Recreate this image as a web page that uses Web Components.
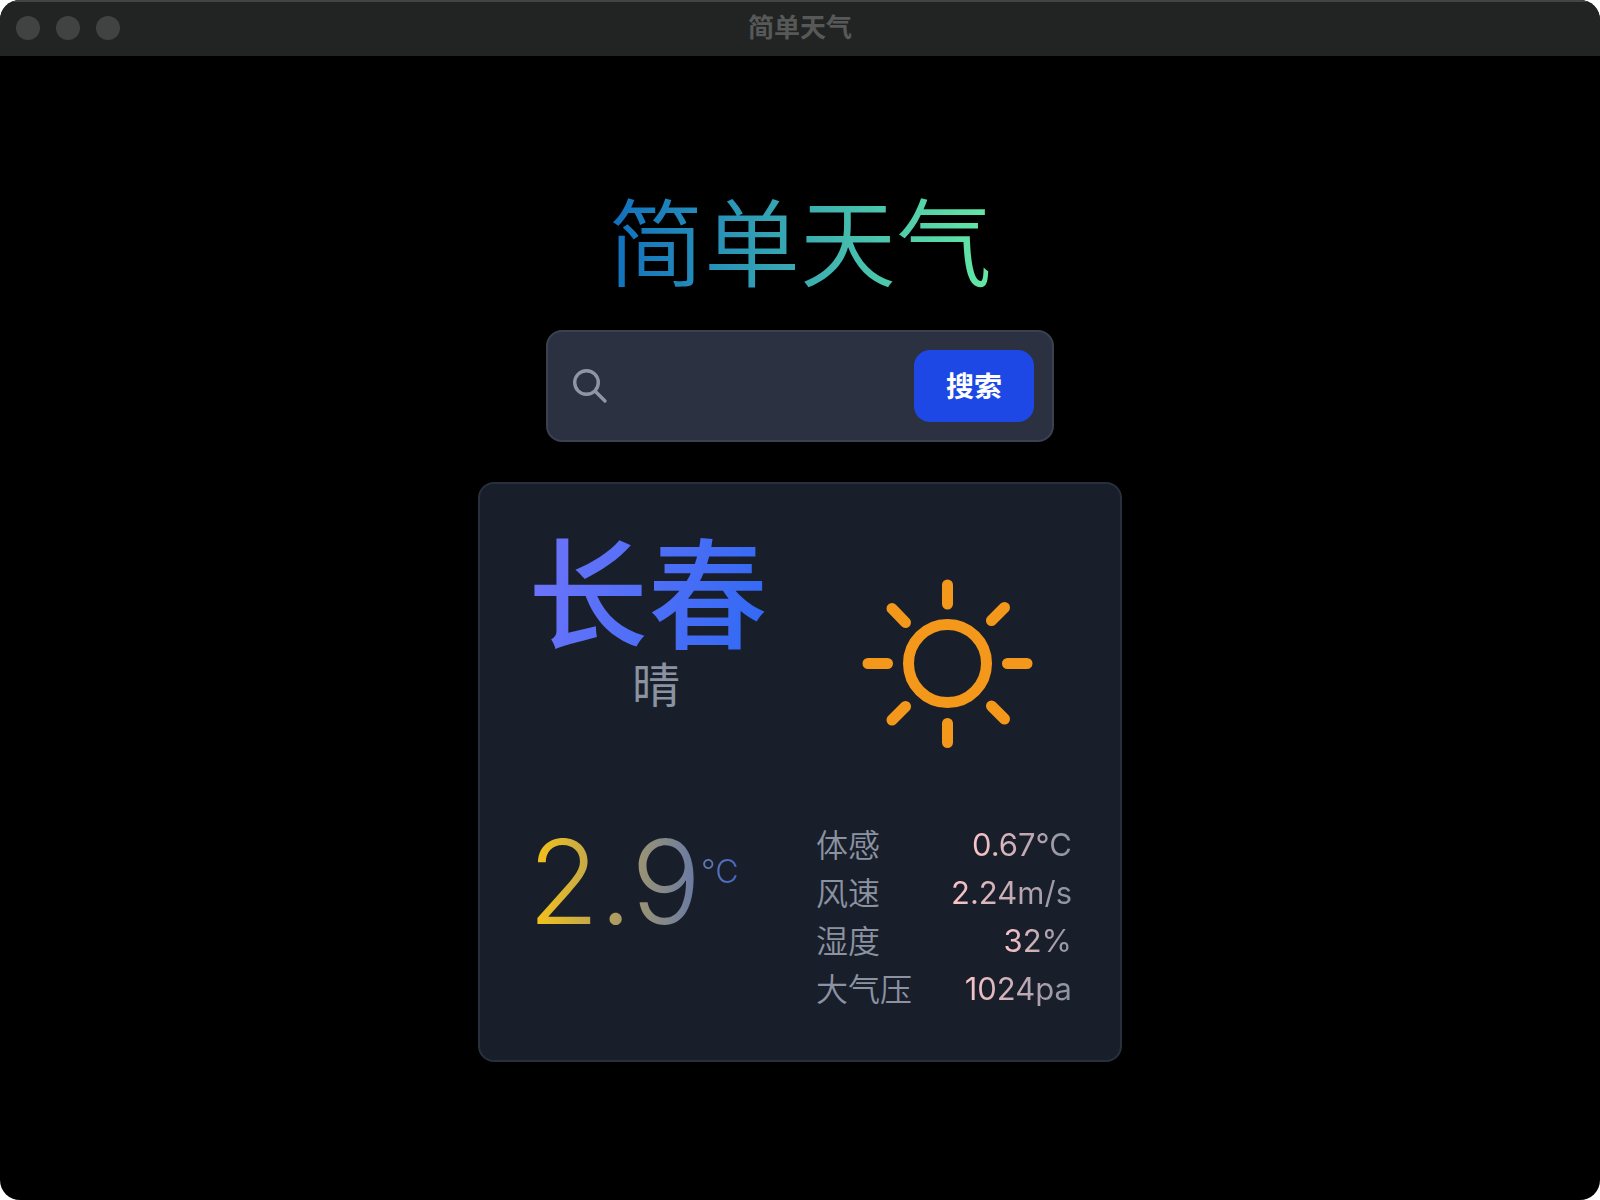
<!DOCTYPE html>
<html lang="zh-CN">
<head>
<meta charset="utf-8">
<meta name="viewport" content="width=device-width, initial-scale=1">
<title>简单天气</title>
<style>
  html, body { margin: 0; background: #fff; }
  body { font-family: Inter, "Noto Sans CJK SC", sans-serif; font-weight: 350; }
</style>
</head>
<body>
<app-window name="简单天气">
  <weather-heading>简单天气</weather-heading>
  <search-bar action-text="搜索"></search-bar>
  <weather-card>
    <span slot="city">长春</span>
    <span slot="condition">晴</span>
    <sun-icon slot="icon"></sun-icon>
    <weather-temperature slot="temperature" unit="°C">2.9</weather-temperature>
    <weather-detail slot="details" label="体感">0.67°C</weather-detail>
    <weather-detail slot="details" label="风速">2.24m/s</weather-detail>
    <weather-detail slot="details" label="湿度">32%</weather-detail>
    <weather-detail slot="details" label="大气压">1024pa</weather-detail>
  </weather-card>
</app-window>

<script>
class BaseElement extends HTMLElement {
  constructor() {
    super();
    this.attachShadow({ mode: 'open' });
  }
  connectedCallback() {
    this.shadowRoot.innerHTML = `<style>*{box-sizing:border-box}:host{box-sizing:border-box}</style>` + this.render();
  }
}

customElements.define('app-window', class extends BaseElement {
  render() {
    return `
      <style>
        :host { display: flex; flex-direction: column; min-height: 100vh; background: #000; border-radius: 20px; overflow: hidden; }
        header { display: grid; grid-template-columns: 1fr auto 1fr; align-items: center; height: 56px; padding: 0 16px; background: #222423; box-shadow: inset 0 2px #434544; }
        .dots { display: flex; gap: 16px; }
        .dots i { width: 24px; height: 24px; border-radius: 50%; background: #414342; }
        .name { font-size: 26px; line-height: 32px; font-weight: 700; color: #575958; }
        main { display: flex; flex-direction: column; align-items: center; padding: 140px 24px 40px; }
      </style>
      <header>
        <div class="dots"><i></i><i></i><i></i></div>
        <div class="name">${this.getAttribute('name')}</div>
      </header>
      <main><slot></slot></main>`;
  }
});

customElements.define('weather-heading', class extends BaseElement {
  render() {
    return `
      <style>
        :host { display: block; margin-bottom: 38px; }
        h1 { margin: 0; font-size: 96px; line-height: 96px; font-weight: 350; color: transparent;
             background: linear-gradient(to right, #106fbf, #64e9a4); -webkit-background-clip: text; background-clip: text; }
      </style>
      <h1><slot></slot></h1>`;
  }
});

customElements.define('search-bar', class extends BaseElement {
  render() {
    return `
      <style>
        :host { display: block; width: 100%; max-width: 508px; margin-bottom: 40px; }
        form { display: flex; align-items: center; gap: 16px; padding: 18px; padding-left: 24px; background: #2b3141; border: 2px solid #3a4250; border-radius: 16px; }
        label { display: flex; }
        svg { width: 36px; height: 36px; }
        input { flex: 1; min-width: 0; height: 48px; padding: 0; border: 0; outline: 0; background: transparent; color: #fff; font: inherit; font-size: 28px; }
        button { height: 72px; padding: 2px 32px 0; border: 0; border-radius: 16px; background: #1d48e5; color: #fff; font: inherit; font-size: 28px; line-height: 40px; font-weight: 700; }
      </style>
      <form>
        <label for="q" aria-label="${this.getAttribute('action-text')}">
          <svg viewBox="0 0 36 36" fill="none" stroke="#8f96a3" stroke-width="3.400" stroke-linecap="round">
            <circle cx="14.500" cy="14.500" r="11.800"/><path d="M23.200 23.200L33 33"/>
          </svg>
        </label>
        <input id="q" type="text">
        <button type="button">${this.getAttribute('action-text')}</button>
      </form>`;
  }
});

customElements.define('weather-card', class extends BaseElement {
  render() {
    return `
      <style>
        :host { display: grid; grid-template-columns: 1fr 1fr; width: 100%; max-width: 644px; padding: 48px 48px 46px;
                background: #191f2a; border: 2px solid #28303e; border-radius: 16px; }
        .place { display: flex; flex-direction: column; align-items: center; width: 256px; height: 290px; padding-top: 6px;
                 font-family: "Liberation Sans", "Noto Sans CJK SC", sans-serif; }
        .city { align-self: flex-start; font-size: 120px; line-height: 120px; font-weight: 500; color: transparent;
                background: linear-gradient(105deg, #7074fa, #2e69f4); -webkit-background-clip: text; background-clip: text; }
        .condition { font-size: 48px; line-height: 58px; font-weight: 400; color: #8b92a1; }
        .icon { padding-left: 16px; }
        .details { display: flex; flex-direction: column; padding-left: 16px; }
      </style>
      <div class="place">
        <div class="city"><slot name="city"></slot></div>
        <div class="condition"><slot name="condition"></slot></div>
      </div>
      <div class="icon"><slot name="icon"></slot></div>
      <slot name="temperature"></slot>
      <div class="details"><slot name="details"></slot></div>`;
  }
});

customElements.define('sun-icon', class extends BaseElement {
  render() {
    return `
      <style>
        :host { display: block; }
        svg { display: block; width: 100%; }
      </style>
      <svg viewBox="0 0 256 256" fill="none" stroke="#f4981b" stroke-width="11" stroke-linecap="round">
        <circle cx="131.500" cy="131.500" r="39"/>
        <path d="M131.500 53v19M131.500 191.500v19M52 131.500h19.500M191.500 131.500h19.500M76 76.500l13.500 14M188.500 75.500l-13 13M76 188l13.500-13.500M175.500 174l13 13"/>
      </svg>`;
  }
});

customElements.define('weather-temperature', class extends BaseElement {
  render() {
    return `
      <style>
        :host { display: block; }
        .value { display: inline-flex; align-items: flex-start; font-size: 116px; line-height: 120px; font-weight: 300; color: transparent;
                 background: linear-gradient(to right, #fac414, #4468c8); -webkit-background-clip: text; background-clip: text; }
        .unit { padding-top: 26px; font-size: 32px; line-height: 48px; }
      </style>
      <div class="value"><span><slot></slot></span><span class="unit">${this.getAttribute('unit')}</span></div>`;
  }
});

customElements.define('weather-detail', class extends BaseElement {
  render() {
    return `
      <style>
        :host { display: flex; justify-content: space-between; font-size: 32px; line-height: 48px; }
        .label { color: #8b92a1; }
        .value { font-size: 31px; font-weight: 400; line-height: 46px; color: transparent; background: linear-gradient(to right, #fdc5c9, #8b92a1); -webkit-background-clip: text; background-clip: text; }
      </style>
      <span class="label">${this.getAttribute('label')}</span>
      <span class="value"><slot></slot></span>`;
  }
});
</script>
</body>
</html>
